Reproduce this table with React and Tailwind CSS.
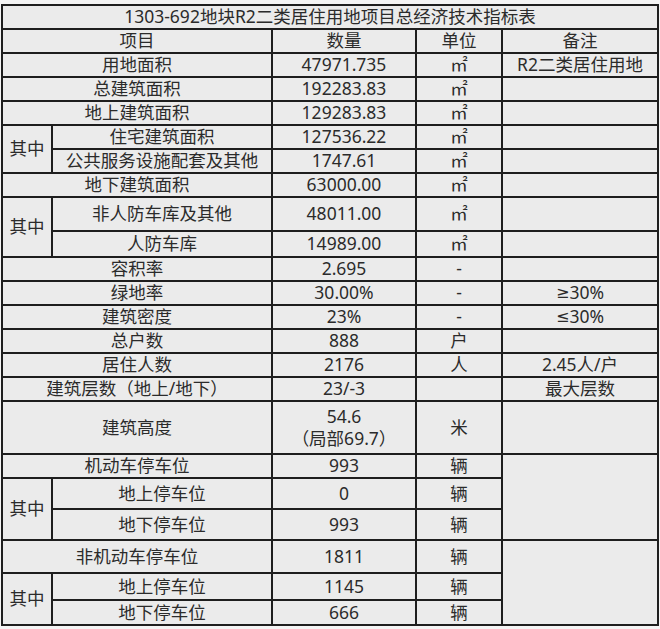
import React from "react";

const font = { fontFamily: "'Noto Sans', 'Noto Sans CJK SC', sans-serif" };

function Cell({ className = "", children }) {
  return (
    <div className={"flex items-center justify-center bg-[#ebebeb] text-[#2b2b2b] leading-tight text-center " + className}>
      {children}
    </div>
  );
}

// ≥ / ≤ with a narrow latin glyph, not the CJK full-width one
function Cmp({ sign }) {
  return <span className="font-['DejaVu_Sans'] text-[16px]">{sign}</span>;
}

export default function App() {
  return (
    <div className="w-[660px] h-[629px] bg-[#f4f4f4] pt-[4px] pl-[1px]" style={font}>
      <div className="grid w-[658px] gap-[2px] bg-[#1e1e1e] p-[2px] text-[17.5px] grid-cols-[48px_218px_142px_84px_154px] grid-rows-[22px_22px_22px_22px_22px_22px_22px_22px_32px_24px_22px_22px_22px_22px_22px_22px_51px_22px_29px_29px_31px_25px_23px]">
        <Cell className="col-span-5">1303-692地块R2二类居住用地项目总经济技术指标表</Cell>

        <Cell className="col-span-2">项目</Cell>
        <Cell>数量</Cell>
        <Cell>单位</Cell>
        <Cell>备注</Cell>

        <Cell className="col-span-2">用地面积</Cell>
        <Cell>47971.735</Cell>
        <Cell>㎡</Cell>
        <Cell>R2二类居住用地</Cell>

        <Cell className="col-span-2">总建筑面积</Cell>
        <Cell>192283.83</Cell>
        <Cell>㎡</Cell>
        <Cell />

        <Cell className="col-span-2">地上建筑面积</Cell>
        <Cell>129283.83</Cell>
        <Cell>㎡</Cell>
        <Cell />

        <Cell className="row-span-2">其中</Cell>
        <Cell>住宅建筑面积</Cell>
        <Cell>127536.22</Cell>
        <Cell>㎡</Cell>
        <Cell />
        <Cell>公共服务设施配套及其他</Cell>
        <Cell>1747.61</Cell>
        <Cell>㎡</Cell>
        <Cell />

        <Cell className="col-span-2">地下建筑面积</Cell>
        <Cell>63000.00</Cell>
        <Cell>㎡</Cell>
        <Cell />

        <Cell className="row-span-2">其中</Cell>
        <Cell>非人防车库及其他</Cell>
        <Cell>48011.00</Cell>
        <Cell>㎡</Cell>
        <Cell />
        <Cell>人防车库</Cell>
        <Cell>14989.00</Cell>
        <Cell>㎡</Cell>
        <Cell />

        <Cell className="col-span-2">容积率</Cell>
        <Cell>2.695</Cell>
        <Cell>-</Cell>
        <Cell />

        <Cell className="col-span-2">绿地率</Cell>
        <Cell>30.00%</Cell>
        <Cell>-</Cell>
        <Cell><Cmp sign="≥" />30%</Cell>

        <Cell className="col-span-2">建筑密度</Cell>
        <Cell>23%</Cell>
        <Cell>-</Cell>
        <Cell><Cmp sign="≤" />30%</Cell>

        <Cell className="col-span-2">总户数</Cell>
        <Cell>888</Cell>
        <Cell>户</Cell>
        <Cell />

        <Cell className="col-span-2">居住人数</Cell>
        <Cell>2176</Cell>
        <Cell>人</Cell>
        <Cell>2.45人/户</Cell>

        <Cell className="col-span-2">建筑层数（地上/地下）</Cell>
        <Cell>23/-3</Cell>
        <Cell />
        <Cell>最大层数</Cell>

        <Cell className="col-span-2">建筑高度</Cell>
        <Cell className="flex-col">
          <span>54.6</span>
          <span>（局部69.7）</span>
        </Cell>
        <Cell>米</Cell>
        <Cell />

        <Cell className="col-span-2">机动车停车位</Cell>
        <Cell>993</Cell>
        <Cell>辆</Cell>
        <Cell className="row-span-3" />

        <Cell className="row-span-2">其中</Cell>
        <Cell>地上停车位</Cell>
        <Cell>0</Cell>
        <Cell>辆</Cell>
        <Cell>地下停车位</Cell>
        <Cell>993</Cell>
        <Cell>辆</Cell>

        <Cell className="col-span-2">非机动车停车位</Cell>
        <Cell>1811</Cell>
        <Cell>辆</Cell>
        <Cell className="row-span-3" />

        <Cell className="row-span-2">其中</Cell>
        <Cell>地上停车位</Cell>
        <Cell>1145</Cell>
        <Cell>辆</Cell>
        <Cell>地下停车位</Cell>
        <Cell>666</Cell>
        <Cell>辆</Cell>
      </div>
    </div>
  );
}
